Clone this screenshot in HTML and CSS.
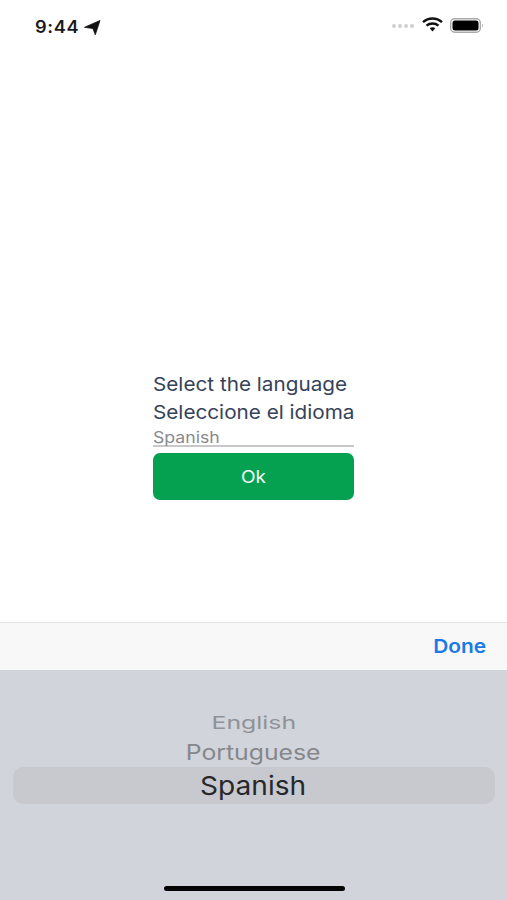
FILE: index.html
```html
<!DOCTYPE html>
<html lang="en">
<head>
<meta charset="utf-8">
<title>Language</title>
<link rel="stylesheet" href="styles.css">
</head>
<body>
<div class="screen">
  <header class="status">
    <div class="status-left">
      <span class="time">9:44</span>
      <svg class="loc" width="17" height="15" viewBox="0 0 17 15"><path d="M0.500 7.300 16 0.500 11.300 14.800 8.900 8.600Z" fill="#111" stroke="#111" stroke-width="0.800" stroke-linejoin="round"/></svg>
    </div>
    <div class="status-right">
      <svg width="24" height="6" viewBox="0 0 24 6"><g fill="#d0d0d0"><circle cx="3" cy="3" r="2"/><circle cx="9" cy="3" r="2"/><circle cx="15" cy="3" r="2"/><circle cx="21" cy="3" r="2"/></g></svg>
      <svg class="wifi" width="21" height="15" viewBox="0 0 21 15"><g fill="none" stroke="#111" stroke-width="2.400"><path d="M1 5.200C6.500 0.200 14.500 0.200 20 5.200"/><path d="M4.500 8.600C7.800 5.700 13.200 5.700 16.500 8.600"/></g><path d="M7.700 11.300C9.300 10 11.700 10 13.300 11.300L10.500 14.500Z" fill="#111"/></svg>
      <svg class="battery" width="34" height="15" viewBox="0 0 34 15"><rect x="0.700" y="0.700" width="29.600" height="13.600" rx="4" fill="none" stroke="#aaa" stroke-width="1.400"/><rect x="2.500" y="2.500" width="26" height="10" rx="2.500" fill="#000"/><path d="M32 5.500C33.200 6 33.200 9 32 9.500Z" fill="#aaa"/></svg>
    </div>
  </header>
  <main class="content">
    <form class="form">
      <p class="label"><span class="wide-label">Select the language</span></p>
      <p class="label"><span class="wide-label">Seleccione el idioma</span></p>
      <div class="field"><span class="wide-field">Spanish</span></div>
      <button class="ok" type="button"><span class="wide-ok">Ok</span></button>
    </form>
  </main>
  <div class="toolbar"><span class="done">Done</span></div>
  <section class="picker">
    <div class="item item-far"><span class="wide-far">English</span></div>
    <div class="item item-near"><span class="wide-near">Portuguese</span></div>
    <div class="item item-selected"><span class="wide-sel">Spanish</span></div>
    <div class="home"></div>
  </section>
</div>
</body>
</html>
```
FILE: styles.css
```css
* { box-sizing: border-box; }
html, body { margin: 0; padding: 0; }
body { font-family: Inter, "Liberation Sans", sans-serif; background: #fff; }
.screen { width: 507px; height: 900px; display: flex; flex-direction: column; overflow: hidden; }

.wide-label, .wide-field, .wide-ok, .wide-far, .wide-near, .wide-sel, .time, .done { display: inline-block; }
.wide-label { transform: scaleX(1.09); transform-origin: left center; }
.wide-field { transform: scaleX(1.14); transform-origin: left center; }
.wide-ok { transform: scaleX(1.09); }
.wide-far { transform: scaleX(1.42); }
.wide-near { transform: scaleX(1.18); }
.wide-sel { transform: scaleX(1.08); }

.status { height: 46px; flex: none; display: flex; justify-content: space-between; align-items: flex-start; padding: 19px 23px 0 35px; }
.status-left { display: flex; align-items: center; gap: 8px; }
.time { font-size: 17px; line-height: 17px; font-weight: 600; color: #1a1a1a; letter-spacing: 0.6px; transform: scaleX(1.07); transform-origin: left center; }
.status-right { display: flex; align-items: center; gap: 7px; }
.wifi { margin-top: -3px; }
.battery { margin-top: -1px; }

.content { flex: 1; display: flex; justify-content: center; padding-top: 325px; }
.form { width: 201px; display: flex; flex-direction: column; }
.label { margin: 0; font-size: 19px; line-height: 28px; color: #36425a; white-space: nowrap; }
.field { margin-top: -1px; height: 21px; padding-top: 3px; font-size: 15.500px; line-height: 17px; color: #8a8a8e; border-bottom: 2px solid #c8c8cb; }
.ok { height: 47px; margin-top: 6px; border: 0; border-radius: 7px; background: #05a150; color: #f4fff8; font: 400 17.500px Inter, "Liberation Sans", sans-serif; }

.toolbar { height: 48px; flex: none; display: flex; align-items: center; justify-content: flex-end; padding-right: 21px; background: #f7f8f7; border-top: 1px solid #e4e4e4; }
.done { font-size: 19px; font-weight: 600; color: #1a7be6; transform: scaleX(1.1); transform-origin: right center; }

.picker { height: 230px; flex: none; position: relative; background: #d1d4da; display: flex; flex-direction: column; align-items: center; padding-top: 41px; }
.item { text-align: center; }
.item-far { font-size: 17.500px; line-height: 24px; color: #8f9297; }
.item-near { font-size: 21px; line-height: 30px; margin-top: 3px; color: #85878c; }
.item-selected { width: 482px; height: 37px; margin-top: -1px; border-radius: 10px; background: #c8c9cf; font-size: 26px; line-height: 37px; color: #26282c; }
.home { position: absolute; left: 164px; bottom: 9px; width: 181px; height: 5px; border-radius: 3px; background: #050505; }
```
